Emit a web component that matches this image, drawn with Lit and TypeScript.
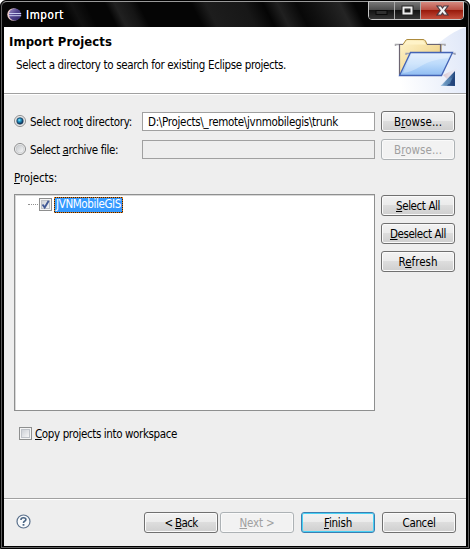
import { LitElement, html, css, svg } from "lit";
import { customElement, property } from "lit/decorators.js";

/* Text run that spreads its letters over a fixed width; the mnemonic locates the underlined letter. */
@customElement("ui-text")
class UiText extends LitElement {
  @property() text = "";
  @property({ type: Number }) width = 0;
  @property() mnemonic = "";
  static styles = css`
    :host { display: inline-block; white-space: pre; line-height: 14px; height: 14px; }
    u { text-decoration: underline; text-decoration-thickness: 1px; text-underline-offset: 1px; text-decoration-skip-ink: none; }
  `;
  render() {
    const i = this.mnemonic ? this.text.indexOf(this.mnemonic) : -1;
    return i < 0
      ? html`<span>${this.text}</span>`
      : html`<span>${this.text.slice(0, i)}<u>${this.text[i]}</u>${this.text.slice(i + 1)}</span>`;
  }
  updated() {
    const span = this.renderRoot.querySelector("span")!;
    this.style.width = this.width + "px";
    span.style.letterSpacing = "0px";
    const natural = span.getBoundingClientRect().width;
    span.style.letterSpacing = (this.width - natural) / this.text.length + "px";
  }
}

@customElement("ui-button")
class UiButton extends LitElement {
  @property() text = "";
  @property({ type: Number }) width = 0;
  @property() mnemonic = "";
  @property({ type: Boolean, reflect: true }) disabled = false;
  @property({ type: Boolean, reflect: true }) primary = false;
  static styles = css`
    :host { display: block; width: 74px; height: 21px; flex: none; }
    button {
      display: flex; align-items: center; justify-content: center; box-sizing: border-box;
      width: 100%; height: 100%; padding: 0; border: 1px solid #707070; border-radius: 3px;
      background: linear-gradient(#f2f2f2, #ebebeb 48%, #dddddd 50%, #cfcfcf);
      box-shadow: inset 0 0 0 1px #fafafa; color: #000; font: inherit;
    }
    :host([disabled]) button { background: #f2f2f2; border-color: #adb2b5; color: #a0a0a0; }
    :host([primary]) button { border-color: #3c7fb1; box-shadow: inset 0 0 0 1px #48d1f5; }
  `;
  render() {
    return html`<button ?disabled=${this.disabled}>
      <ui-text .text=${this.text} .width=${this.width} .mnemonic=${this.mnemonic}></ui-text>
    </button>`;
  }
}

const eclipseIcon = svg`<svg width="15" height="14" viewBox="0 0 15 14">
  <defs>
    <linearGradient id="e" x1="0" x2="1" y1="0" y2="1"><stop offset="0" stop-color="#a596c8"/><stop offset=".45" stop-color="#51448d"/><stop offset="1" stop-color="#2e2566"/></linearGradient>
    <linearGradient id="r" x1="0" x2="1"><stop offset="0" stop-color="#f4d3d0"/><stop offset="1" stop-color="#a489a8"/></linearGradient>
  </defs>
  <circle cx="6.6" cy="6.500" r="6.300" fill="url(#r)"/><circle cx="8" cy="6.500" r="6.100" fill="url(#e)"/>
  <path d="M2 5.500h12.200M2 7.700h12.200" stroke="#c9cdf0" stroke-width="1"/>
</svg>`;

const folderArt = svg`<svg width="76" height="66" viewBox="390 27 76 66">
  <defs>
    <linearGradient id="bg" x1="0" x2="1" y1=".2" y2="0"><stop offset="0" stop-color="#fff"/><stop offset="1" stop-color="#dfe7f8"/></linearGradient>
    <linearGradient id="y" x1="0" x2="1" y1="0" y2="1"><stop offset="0" stop-color="#fff5ce"/><stop offset="1" stop-color="#eac66f"/></linearGradient>
    <linearGradient id="b" x1="0" x2="0" y1="0" y2="1"><stop offset="0" stop-color="#dceafd"/><stop offset=".5" stop-color="#bbdafb"/><stop offset="1" stop-color="#8fbcf2"/></linearGradient>
    <linearGradient id="t" x1="0" x2="1"><stop offset="0" stop-color="#a9cbe8"/><stop offset=".5" stop-color="#5f88b4"/><stop offset="1" stop-color="#21457c"/></linearGradient>
    <linearGradient id="s" x1="0" x2="1"><stop offset="0" stop-color="#d9c3cb"/><stop offset="1" stop-color="#f0e8f2" stop-opacity="0"/></linearGradient>
  </defs>
  <path d="M466 27V93H390Q398 78 420 62Q444 34 466 27Z" fill="url(#bg)"/>
  <path d="M443 75L457 68Q461 69 455 73L447 79Z" fill="url(#s)"/>
  <path d="M395.500 46v-1.500H445v1.500" fill="none" stroke="#a9a9ad" stroke-width="1.500"/>
  <path d="M399.500 75.500V44.500H403L406 40Q406.500 39.500 408 39.500H423Q424.500 39.500 425.500 41L427 44.500H441V75.500Z" fill="url(#y)" stroke="#ad8b3c"/>
  <path d="M399.500 75V44.500H403M427 44.500H440.500V53" fill="none" stroke="#6c6572" stroke-width="1.200"/>
  <path d="M404 44.500L407 41H423L426 44.500Z" fill="#fff3c8"/>
  <path d="M406 55v-1.500H455v1.500" fill="none" stroke="#9aa0b4" stroke-width="1.300"/>
  <path d="M410.500 52.500H452.500L441.500 75.500H399.500Z" fill="url(#b)" stroke="#4363b5" stroke-width="1.300"/>
  <path d="M411.500 54H450L448 58Q430 60 421 66Q412 72 403 73Z" fill="#fff" opacity=".3"/>
  <path d="M455 71V86H440.500Z" fill="url(#t)"/>
  <path d="M454.500 76V85.500H447L451 81Z" fill="#1f4078" opacity=".8"/><path d="M448 79L452 78L450 84L443 85Z" fill="#5d8bb8" opacity=".7"/>
</svg>`;

@customElement("app-root")
class AppRoot extends LitElement {
  static styles = css`
    :host { display: block; width: 470px; height: 549px; overflow: hidden; background: #fff; color: #000;
      font: 11.500px/14px "DejaVu Sans Condensed", "DejaVu Sans", sans-serif; font-stretch: condensed; }
    .window { position: relative; box-sizing: border-box; width: 470px; height: 549px; border-radius: 6px 6px 0 0;
      border: 1px solid #000; background: #000; box-shadow: inset 0 0 0 1px #5d5d5d; padding: 0 3px 3px 3px; }
    .titlebar { display: flex; align-items: center; height: 26px; margin: 0 -2px; padding: 0 0 0 5px; box-sizing: border-box;
      border-top: 1px solid #999; border-radius: 5px 5px 0 0; color: #fff; text-shadow: 0 0 .5px #fff;
      background: linear-gradient(63deg, #050505 15%, #111 17%, #050505 20%, #050505 24%, #202020 26%, #151515 29%, #050505 31%, #050505 42%, #1d1d1d 45%, #171717 53%, #050505 57%, #202020 60%, #080808 64%, #101010 67%, #242424 73%, #050505 76%); }
    .titlebar svg { margin-top: 1px; }
    .titlebar ui-text { margin: 1px 0 0 4px; }
    .controls { position: absolute; top: 0; right: 5px; display: flex; width: 94px; height: 17px; border: 1px solid #c6c6c6;
      border-radius: 0 0 4px 4px; overflow: hidden; }
    .ctl { display: flex; align-items: center; justify-content: center; width: 25px; border-right: 1px solid #aaa;
      background: linear-gradient(#777 0, #4d4d4d 45%, #131313 50%, #353535); }
    .close { flex: 1; border: 0; background: linear-gradient(#d58a80, #ba5145 45%, #991b0c 50%, #c5503e); }
    .banner { display: flex; justify-content: space-between; height: 66px; background: #fff; border-bottom: 1px solid #a0a0a0; overflow: hidden; }
    .intro { padding: 8px 0 0 5px; }
    .heading { display: block; font-weight: 700; font-size: 13px; }
    .description { margin: 9px 0 0 7px; }
    .body { height: 404px; box-sizing: border-box; border-top: 1px solid #fff; padding: 16px 11px 0 10px; background: #eee; }
    .source { display: flex; align-items: center; height: 21px; margin-bottom: 7px; }
    .source svg, .option svg { flex: none; }
    .source svg { margin-bottom: 1px; }
    .source ui-text.label { margin-left: 4px; }
    .field { box-sizing: border-box; display: flex; align-items: center; width: 233px; height: 19px; margin: 0 6px 0 auto;
      padding: 0 0 0 5px; border: 1px solid #a0a0a0; background: #fff; }
    .field.off { background: #eee; }
    .caption { display: block; margin: 11px 0 9px; }
    .main { display: flex; gap: 6px; }
    .tree { box-sizing: border-box; width: 361px; height: 217px; border: 1px solid #8e8f8f; box-shadow: inset 1px 1px #d8d8d8; background: #fff; }
    .item { display: flex; align-items: center; height: 19px; padding-left: 13px; }
    .branch { width: 10px; border-top: 1px dotted #909090; margin-right: 1px; }
    .selected { margin-left: 2px; display: flex; height: 14px; padding: 0 1px; border: 1px dotted #e57d18; background: #39f padding-box, #222; background: linear-gradient(#39f, #39f) padding-box, #222; color: #fff; }
    .selected ui-text { margin-top: -1px; }
    .actions { display: flex; flex-direction: column; gap: 7px; padding-top: 1px; }
    .option { display: flex; align-items: center; height: 14px; margin: 15px 0 0 5px; gap: 3px; }
    .option ui-text { margin-top: 1px; }
    .footer { display: flex; align-items: center; box-sizing: border-box; height: 48px; padding: 0 10px 0 12px; background: #eee;
      border-top: 1px solid #a0a0a0; box-shadow: inset 0 1px #fff; }
    .footer svg { margin-top: -2px; }
    .footer ui-button:nth-of-type(1) { margin-left: auto; }
    .footer ui-button:nth-of-type(2) { margin-left: 2px; }
    .footer ui-button:nth-of-type(3) { margin-left: 7px; }
    .footer ui-button:nth-of-type(4) { margin-left: 7px; }
  `;

  private label(text: string, width: number, mnemonic = "", cls = "label") {
    return html`<ui-text class=${cls} .text=${text} .width=${width} .mnemonic=${mnemonic}></ui-text>`;
  }
  private button(text: string, width: number, mnemonic = "", disabled = false, primary = false) {
    return html`<ui-button .text=${text} .width=${width} .mnemonic=${mnemonic} ?disabled=${disabled} ?primary=${primary}></ui-button>`;
  }
  private radio(on: boolean) {
    return html`<svg width="12" height="12" viewBox="0 0 12 12">
      <defs><radialGradient id="d" cx=".4" cy=".35" r=".6"><stop offset="0" stop-color="#9beaff"/><stop offset=".4" stop-color="#249bcb"/><stop offset="1" stop-color="#103258"/></radialGradient>
      <linearGradient id="g" x1="0" y1="0" x2="1" y2="1"><stop offset="0" stop-color="#c3c6ca"/><stop offset="1" stop-color="#fafafa"/></linearGradient></defs>
      <circle cx="6" cy="6" r="5.500" fill="#f6f6f6" stroke="#8a8b8c"/>
      <circle cx="6" cy="6" r="4" fill="url(#g)" stroke="#c0c3c6" stroke-width=".6"/>
      ${on ? svg`<circle cx="6" cy="6" r="3.200" fill="url(#d)" stroke="#173a5c" stroke-width=".7"/>` : ""}
    </svg>`;
  }
  private checkbox(on: boolean) {
    return html`<svg width="13" height="13" viewBox="0 0 13 13">
      <defs><linearGradient id="c" x1="0" y1="0" x2="1" y2="1"><stop offset="0" stop-color="#cbcfd5"/><stop offset="1" stop-color="#f8f8f8"/></linearGradient></defs>
      <rect x=".5" y=".5" width="12" height="12" fill="#f5f5f5" stroke="#8e8f8f"/>
      <rect x="2.500" y="2.500" width="8" height="8" fill="url(#c)" stroke="#bfc3c9"/>
      ${on ? svg`<path d="M3.500 6.500L5.700 9.500L9.700 2.800" fill="none" stroke="#425a96" stroke-width="1.900"/>` : ""}
    </svg>`;
  }

  render() {
    return html`<div class="window">
      <div class="titlebar">${eclipseIcon}${this.label("Import", 38)}</div>
      <div class="controls">
        <div class="ctl"><svg width="13" height="17"><rect x="1" y="8.500" width="11" height="4" fill="#303030" stroke="#090909"/></svg></div>
        <div class="ctl"><svg width="13" height="17"><rect x="2.500" y="5.500" width="8" height="6" fill="none" stroke="#222" stroke-width="4"/><rect x="2.500" y="5.500" width="8" height="6" fill="none" stroke="#eee" stroke-width="2"/></svg></div>
        <div class="ctl close"><svg width="15" height="17"><path d="M2 4H6L7.500 6L9 4H13L9.800 8.500L13 13H9L7.500 11L6 13H2L5.200 8.500Z" fill="#f0f0f0" stroke="#4b3b43" stroke-width="1.200"/></svg></div>
      </div>
      <div class="banner">
        <div class="intro">${this.label("Import Projects", 103, "", "heading")}
          ${this.label("Select a directory to search for existing Eclipse projects.", 270, "", "description")}</div>
        ${folderArt}
      </div>
      <div class="body">
        <div class="source">${this.radio(true)}${this.label("Select root directory:", 102, "t directory")}
          <div class="field">${this.label("D:\\Projects\\_remote\\jvnmobilegis\\trunk", 190, "", "")}</div>
          ${this.button("Browse...", 48, "r")}</div>
        <div class="source">${this.radio(false)}${this.label("Select archive file:", 88, "archive")}
          <div class="field off"></div>${this.button("Browse...", 48, "r", true)}</div>
        ${this.label("Projects:", 43, "P", "caption")}
        <div class="main">
          <div class="tree"><div class="item"><span class="branch"></span>${this.checkbox(true)}
            <span class="selected">${this.label("JVNMobileGIS", 65, "", "")}</span></div></div>
          <div class="actions">${this.button("Select All", 44, "S")}${this.button("Deselect All", 56, "D")}${this.button("Refresh", 39, "e")}</div>
        </div>
        <div class="option">${this.checkbox(false)}${this.label("Copy projects into workspace", 142, "C")}</div>
      </div>
      <div class="footer">
        <svg width="15" height="15" viewBox="0 0 15 15"><circle cx="7.500" cy="7.500" r="6.500" fill="#f8fafc" stroke="#5b718c" stroke-width="1.200"/>
          <path d="M5 6V5.500Q5 3.700 7.400 3.700Q9.900 3.700 9.900 5.500Q9.900 6.700 8.500 7.300Q7.500 7.800 7.500 9" fill="none" stroke="#4a6584" stroke-width="1.600"/><rect x="6.600" y="10" width="1.800" height="1.700" fill="#4a6584"/></svg>
        ${this.button("< Back", 33, "B")}${this.button("Next >", 35, "N", true)}${this.button("Finish", 28, "F", false, true)}${this.button("Cancel", 33)}
      </div>
    </div>`;
  }
}
